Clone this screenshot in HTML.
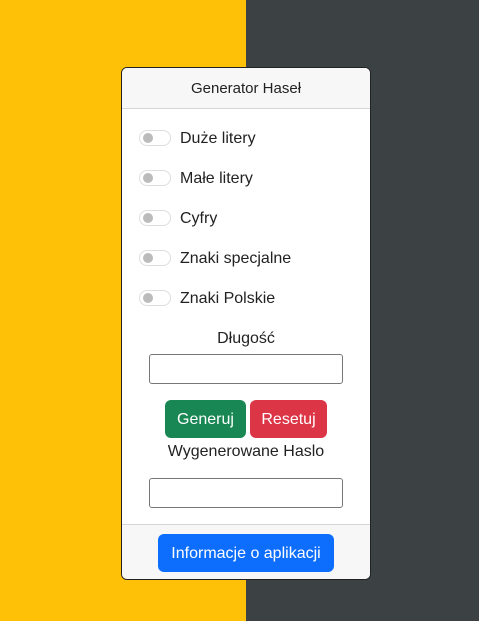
<!DOCTYPE html>
<html><head><style>
body{margin:0;width:479px;height:621px;position:relative;font-family:"Liberation Sans",sans-serif;overflow:hidden;background:linear-gradient(90deg,#ffc107 0 246px,#3c4144 246px);}
.card{position:absolute;left:121px;top:67px;width:248px;height:511px;border:1px solid #222;border-radius:6px;background:#fff;overflow:hidden;}
.hd{height:40px;background:#f7f7f7;border-bottom:1px solid #d6d6d6;text-align:center;line-height:42px;font-size:15px;color:#222;}
.row{position:absolute;left:17px;font-size:16px;color:#222;height:20px;line-height:20px;}
.sw{position:absolute;left:0;top:2px;width:30px;height:14px;border:1px solid #ddd;border-radius:9px;}
.sw:after{content:"";position:absolute;left:3px;top:2px;width:10px;height:10px;border-radius:50%;background:#bbb;}
.row span{position:absolute;left:41px;top:1px;white-space:nowrap;}
.c{position:absolute;left:0;width:248px;text-align:center;font-size:16px;color:#222;}
.in{position:absolute;left:27px;width:192px;height:28px;border:1px solid #777;border-radius:3px;}
.btn{position:absolute;color:#fff;font-size:16px;text-align:center;border-radius:6px;line-height:39px;height:38px;}
.ft{position:absolute;left:0;top:456px;width:248px;height:60px;background:#f7f7f7;border-top:1px solid #d6d6d6;}
</style></head><body>
<div class="card">
<div class="hd">Generator Haseł</div>
<div class="row" style="top:60px"><div class="sw"></div><span>Duże litery</span></div>
<div class="row" style="top:100px"><div class="sw"></div><span>Małe litery</span></div>
<div class="row" style="top:140px"><div class="sw"></div><span>Cyfry</span></div>
<div class="row" style="top:180px"><div class="sw"></div><span>Znaki specjalne</span></div>
<div class="row" style="top:220px"><div class="sw"></div><span>Znaki Polskie</span></div>
<div class="c" style="top:262px">Długość</div>
<div class="in" style="top:286px"></div>
<div class="btn" style="left:43px;top:332px;width:81px;background:#198754">Generuj</div>
<div class="btn" style="left:128px;top:332px;width:77px;background:#dc3545">Resetuj</div>
<div class="c" style="top:375px">Wygenerowane Haslo</div>
<div class="in" style="top:410px"></div>
<div class="ft"><div class="btn" style="left:36px;top:9px;width:176px;background:#0d6efd">Informacje o aplikacji</div></div>
</div>
</body></html>
